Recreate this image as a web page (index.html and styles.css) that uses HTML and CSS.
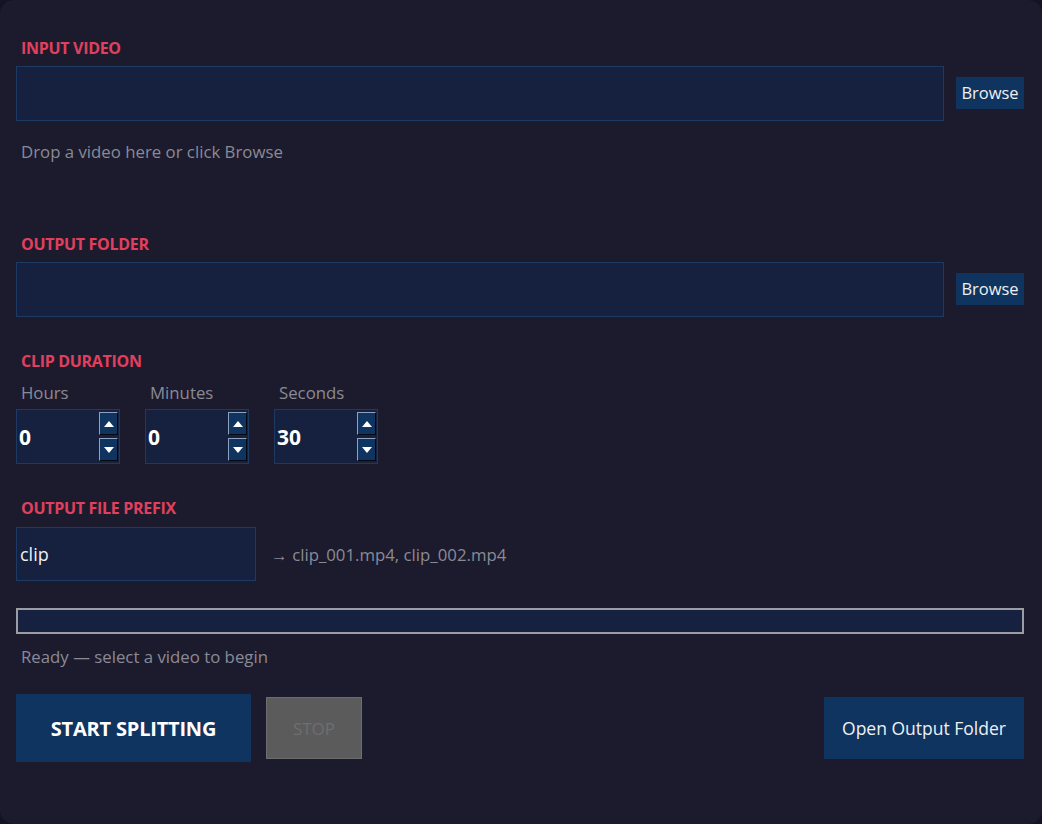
FILE: index.html
```html
<!DOCTYPE html>
<html lang="en">

<head>
    <meta charset="UTF-8">
    <meta name="viewport" content="width=device-width, initial-scale=1.0">
    <title>Video Splitter</title>
    <link rel="stylesheet" href="styles.css">
</head>

<body>
    <main class="window">
        <p class="section-label label-input">INPUT VIDEO</p>
        <div class="path-row">
            <div class="path-box"></div>
            <button class="browse-btn">Browse</button>
        </div>
        <p class="hint drop-hint">Drop a video here or click Browse</p>

        <p class="section-label label-output">OUTPUT FOLDER</p>
        <div class="path-row">
            <div class="path-box"></div>
            <button class="browse-btn">Browse</button>
        </div>

        <p class="section-label label-duration">CLIP DURATION</p>
        <div class="duration-row">
            <div class="spin-field">
                <span class="spin-caption">Hours</span>
                <div class="spin-box">
                    <span class="spin-value">0</span>
                    <div class="spin-arrows">
                        <span class="spin-btn up"></span>
                        <span class="spin-btn down"></span>
                    </div>
                </div>
            </div>
            <div class="spin-field">
                <span class="spin-caption">Minutes</span>
                <div class="spin-box">
                    <span class="spin-value">0</span>
                    <div class="spin-arrows">
                        <span class="spin-btn up"></span>
                        <span class="spin-btn down"></span>
                    </div>
                </div>
            </div>
            <div class="spin-field">
                <span class="spin-caption">Seconds</span>
                <div class="spin-box">
                    <span class="spin-value">30</span>
                    <div class="spin-arrows">
                        <span class="spin-btn up"></span>
                        <span class="spin-btn down"></span>
                    </div>
                </div>
            </div>
        </div>

        <p class="section-label label-prefix">OUTPUT FILE PREFIX</p>
        <div class="prefix-row">
            <div class="prefix-box">clip</div>
            <span class="hint">→ clip_001.mp4, clip_002.mp4</span>
        </div>

        <div class="progress"></div>
        <p class="hint status">Ready — select a video to begin</p>

        <div class="action-row">
            <button class="start-btn">START SPLITTING</button>
            <button class="stop-btn" disabled>STOP</button>
            <button class="open-btn">Open Output Folder</button>
        </div>
    </main>
</body>

</html>
```
FILE: styles.css
```css
html,
body {
    margin: 0;
    padding: 0;
    background: #131324;
    font-family: 'Open Sans', 'Noto Sans', sans-serif;
}

.window {
    display: flex;
    flex-direction: column;
    box-sizing: border-box;
    height: 824px;
    padding: 0 18px 0 16px;
    background: #1c1b2d;
    border-radius: 14px;
    color: #fff;
}

p {
    margin: 0;
}

.section-label {
    height: 18px;
    line-height: 18px;
    padding-left: 5px;
    font-size: 16px;
    font-weight: 700;
    letter-spacing: -0.3px;
    color: #e0405e;
}

.label-input {
    margin-top: 39px;
}

.label-output {
    margin-top: 72px;
}

.label-duration {
    margin-top: 35px;
}

.label-prefix {
    margin-top: 35px;
}

.hint {
    font-size: 16.8px;
    color: #8a8a96;
}

.path-row {
    display: flex;
    align-items: center;
    gap: 12px;
    margin-top: 9px;
}

.path-box {
    flex: 1;
    height: 55px;
    box-sizing: border-box;
    background: #16203f;
    border: 1px solid #1d3a64;
}

.browse-btn {
    height: 32px;
    width: 68px;
    margin-top: -2px;
    padding: 0;
    background: #0f3460;
    border: none;
    color: #f0f0f0;
    font-family: inherit;
    font-size: 16.5px;
}

.drop-hint {
    margin-top: 20px;
    padding-left: 5px;
    line-height: 22px;
}

.duration-row {
    display: flex;
    gap: 25px;
    margin-top: 12px;
}

.spin-field {
    display: flex;
    flex-direction: column;
    gap: 5px;
}

.spin-caption {
    padding-left: 5px;
    height: 22px;
    line-height: 22px;
    font-size: 16.8px;
    color: #8a8a96;
}

.spin-box {
    display: flex;
    align-items: center;
    justify-content: space-between;
    box-sizing: border-box;
    width: 104px;
    height: 55px;
    padding: 0 1px 0 2px;
    background: #16203f;
    border: 1px solid #1d3a64;
}

.spin-value {
    font-size: 21px;
    font-weight: 700;
    color: #fff;
}

.spin-arrows {
    display: flex;
    flex-direction: column;
    gap: 3px;
}

.spin-btn {
    display: flex;
    align-items: center;
    justify-content: center;
    box-sizing: border-box;
    width: 19px;
    height: 23px;
    background: #0f3460;
    border-top: 1px solid #8ea2bf;
    border-left: 1px solid #8ea2bf;
    border-right: 1px solid #05070d;
    border-bottom: 1px solid #05070d;
}

.spin-btn::after {
    content: '';
    width: 0;
    height: 0;
    border-left: 5px solid transparent;
    border-right: 5px solid transparent;
}

.spin-btn.up::after {
    border-bottom: 6px solid #fff;
}

.spin-btn.down::after {
    border-top: 6px solid #fff;
}

.prefix-row {
    display: flex;
    align-items: center;
    gap: 15px;
    margin-top: 10px;
}

.prefix-box {
    display: flex;
    align-items: center;
    box-sizing: border-box;
    width: 240px;
    height: 54px;
    padding-left: 3px;
    background: #16203f;
    border: 1px solid #1d3a64;
    font-size: 18px;
    color: #f0f0f0;
}

.progress {
    margin-top: 27px;
    height: 26px;
    box-sizing: border-box;
    background: #16203f;
    border: 2px solid #9c9ca4;
}

.status {
    margin-top: 12px;
    padding-left: 5px;
    line-height: 22px;
}

.action-row {
    display: flex;
    align-items: center;
    margin-top: 26px;
}

.start-btn {
    width: 235px;
    height: 68px;
    padding: 0;
    background: #0f3460;
    border: none;
    color: #fff;
    font-family: inherit;
    font-size: 20px;
    font-weight: 700;
    letter-spacing: -0.2px;
}

.stop-btn {
    width: 96px;
    height: 62px;
    margin-left: 15px;
    padding: 0;
    background: #5b5b5c;
    border: 1px solid #6c6c70;
    color: #6e6e70;
    font-family: inherit;
    font-size: 17px;
}

.open-btn {
    width: 200px;
    height: 62px;
    margin-left: auto;
    padding: 0;
    background: #0f3460;
    border: none;
    color: #eef0f4;
    font-family: inherit;
    font-size: 17.5px;
}
```
